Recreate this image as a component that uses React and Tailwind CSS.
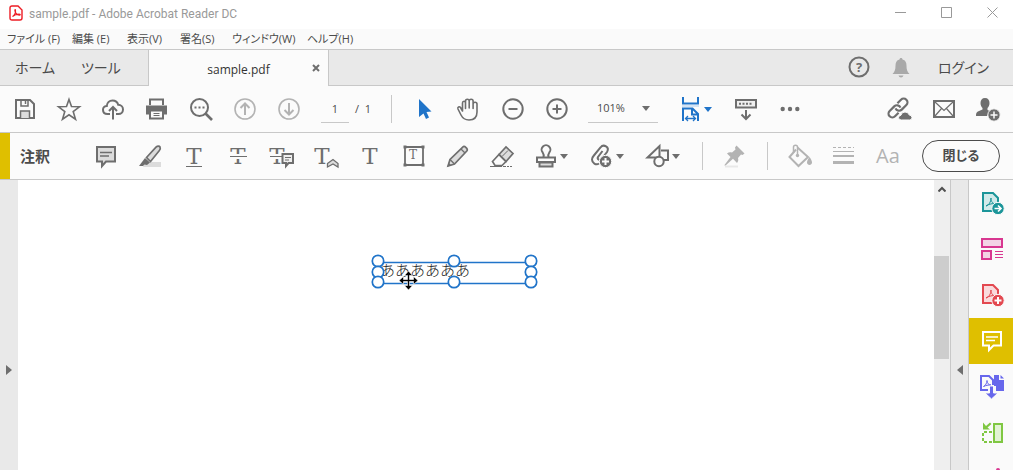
import React, { useState } from 'react';

function Icon({ children, className = '' }) {
  return (
    <svg viewBox="0 0 24 24" fill="none" stroke="currentColor" strokeWidth="2" className={`w-6 h-6 shrink-0 overflow-visible ${className}`} aria-hidden="true">
      {children}
    </svg>
  );
}

function Caret() {
  return (
    <svg viewBox="0 0 8 5" className="w-2 h-[5px] shrink-0" fill="currentColor" aria-hidden="true">
      <path d="M0 0h8L4 5z" />
    </svg>
  );
}

function ToolButton({ label, className = '', children }) {
  return (
    <button aria-label={label} className={`w-11 h-11 shrink-0 flex items-center justify-center ${className}`}>
      <Icon>{children}</Icon>
    </button>
  );
}

function MenuButton({ label, className = '', children }) {
  return (
    <button aria-label={label} className={`w-14 h-11 pl-[10px] shrink-0 flex items-center gap-[2px] ${className}`}>
      <Icon>{children}</Icon>
      <Caret />
    </button>
  );
}

// Serif T shared by the text markup tools
function LetterT({ x = 12, y = 20, size = 23 }) {
  return (
    <text x={x} y={y} fontSize={size} textAnchor="middle" fill="currentColor" stroke="none" fontFamily="'DejaVu Serif', serif">T</text>
  );
}

function PdfPage({ fill }) {
  return (
    <>
      <path d="M4 2h10l5 5v13H4z" fill={fill} />
      <path d="M7 15c3-1 5-4 5-8 0 4 2 6 5 6-3-1-7 0-10 2z" strokeWidth="1" />
    </>
  );
}

const menus = [
  { text: 'ファイル (F)', width: 'w-[65px]' },
  { text: '編集 (E)', width: 'w-[55px]' },
  { text: '表示(V)', width: 'w-[53px]' },
  { text: '署名(S)', width: 'w-[52px]' },
  { text: 'ウィンドウ(W)', width: 'w-[75px]' },
  { text: 'ヘルプ(H)', width: 'w-[60px]' },
];

const handles = [[7, 7], [83, 7], [160, 7], [7, 18], [160, 18], [7, 28], [83, 28], [160, 28]];

function TitleBar() {
  return (
    <header className="h-[29px] shrink-0 bg-white flex items-center text-[#999999]">
      <svg viewBox="0 0 14 16" className="w-[14px] h-4 ml-[9px] -mt-1" fill="none" stroke="#ed1c24" aria-hidden="true">
        <path d="M3 1h6l4 4v8q0 2-2 2H3q-2 0-2-2V3q0-2 2-2z" strokeWidth="1.4" />
        <path d="M3.5 11.5c2-1 3.5-4 3-6.5-.4-1-1 0-.4 1.5.8 2 2.4 3.5 4.6 3.6 1 0 .6-1-.7-1-2.4 0-4.5.7-6.5 2.4z" strokeWidth="1.1" />
      </svg>
      <h1 className="ml-[6px] -mt-px text-xs whitespace-nowrap font-['Roboto',sans-serif]">sample.pdf - Adobe Acrobat Reader DC</h1>
      <div className="ml-auto flex gap-1 -mt-1">
        <button aria-label="最小化" className="w-[42px] h-6 flex items-center justify-center">
          <svg viewBox="0 0 11 11" className="w-[11px] h-[11px]" stroke="currentColor"><path d="M0 5.5h11" /></svg>
        </button>
        <button aria-label="最大化" className="w-[42px] h-6 flex items-center justify-center">
          <svg viewBox="0 0 11 11" className="w-[11px] h-[11px]" fill="none" stroke="currentColor"><path d="M.5.5h10v10H.5z" /></svg>
        </button>
        <button aria-label="ウィンドウを閉じる" className="w-[42px] h-6 flex items-center justify-center">
          <svg viewBox="0 0 11 11" className="w-[11px] h-[11px]" stroke="currentColor"><path d="M.5.5l10 10M10.5.5l-10 10" /></svg>
        </button>
      </div>
    </header>
  );
}

function TabBar() {
  return (
    <div className="h-[37px] shrink-0 flex bg-[#e9e9e9] border-t border-[#c8c8c8] text-[#4b4b4b]">
      <div className="w-[148px] shrink-0 border-b border-[#c8c8c8] flex items-center pl-[15px] gap-[26px] text-sm">
        <button>ホーム</button>
        <button>ツール</button>
      </div>
      <div className="w-[181px] shrink-0 border-x border-[#c8c8c8] bg-[#fbfbfb] flex items-center">
        <span className="flex-1 pl-6 text-center text-[#333333] text-xs pt-[3px]">sample.pdf</span>
        <button aria-label="タブを閉じる" className="w-6 h-6 flex items-center justify-center text-[#6e6e6e]">
          <svg viewBox="0 0 8 8" className="w-2 h-2" stroke="currentColor" strokeWidth="2"><path d="M1 1l6 6M7 1L1 7" /></svg>
        </button>
      </div>
      <div className="flex-1 border-b border-[#c8c8c8] flex items-center justify-end pr-6">
        <button aria-label="ヘルプ" className="w-[42px] flex justify-center text-[#6e6e6e]">
          <Icon>
            <circle cx="12" cy="11" r="9.5" />
            <text x="12" y="16" fontSize="13" fontWeight="700" textAnchor="middle" fill="currentColor" stroke="none">?</text>
          </Icon>
        </button>
        <button aria-label="通知" className="w-[42px] flex justify-center text-[#a9a9a9]">
          <Icon>
            <path d="M12 2c-1 0-1.5.6-1.5 1.5C7.5 4.3 6.500 6.500 6.500 9.500c0 4-.6 6-3 8.500h17c-2.400-2.500-3-4.500-3-8.500 0-3-1-5.200-4-6 0-.9-.5-1.500-1.500-1.500zM9.500 19.500h5q-.6 2-2.500 2t-2.500-2z" fill="currentColor" stroke="none" />
          </Icon>
        </button>
        <button className="ml-4 text-sm">ログイン</button>
      </div>
    </div>
  );
}

function MainToolbar({ page, setPage, zoom, setZoom }) {
  return (
    <div className="h-[47px] shrink-0 flex items-center px-[3px] border-b border-[#c8c8c8] text-[#6e6e6e]">
      <ToolButton label="保存">
        <path d="M3 3h14l4 4v14H3z" />
        <path d="M8 3v6h7V3M12.5 4v3" strokeWidth="1.5" />
        <path d="M7.5 21v-7h9v7" fill="#dcdcdc" strokeWidth="1.5" />
      </ToolButton>
      <ToolButton label="お気に入り">
        <path d="M12 2.5l2.5 7 8 .3-6.3 4.8 2.3 7.6L12 17.800l-6.500 4.400 2.300-7.600L1.500 9.800l8-.3z" strokeWidth="1.6" />
      </ToolButton>
      <ToolButton label="クラウドに保存">
        <path d="M9 17H6.5C3.5 17 2 15 2 12.8 2 10.5 3.8 9 5.8 9 6 5.5 8.5 3.5 11.5 3.5c3 0 5 1.7 5.7 4.3C20 7.8 22 10 22 12.5S20 17 17.5 17H15" />
        <path d="M12 22.5V10.5M8 14l4-4 4 4" />
      </ToolButton>
      <ToolButton label="印刷">
        <path d="M5 8V2.5h13V8" />
        <path d="M1 8.5h21v9h-4V14H5v3.5H1z" fill="currentColor" stroke="none" />
        <path d="M5 13.5h13v8H5z" fill="#fbfbfb" />
        <path d="M8.5 16.5h6M8.5 18.5h6" strokeWidth="1" />
      </ToolButton>
      <ToolButton label="検索">
        <circle cx="10.5" cy="10.5" r="8.5" />
        <path d="M16.5 16.5l6.5 6.5" strokeWidth="2.6" />
        <path d="M5.5 10.5h2M9.5 10.5h2M13.5 10.5h2" />
      </ToolButton>
      <ToolButton label="前のページ" className="text-[#b3b3b3]">
        <circle cx="12" cy="12" r="10" strokeWidth="1.6" />
        <path d="M12 18V7M7.5 11L12 6.5l4.5 4.5" />
      </ToolButton>
      <ToolButton label="次のページ" className="text-[#b3b3b3]">
        <circle cx="12" cy="12" r="10" strokeWidth="1.6" />
        <path d="M12 6v11M7.5 13l4.5 4.5 4.5-4.5" />
      </ToolButton>

      <div className="ml-[10px] flex items-center gap-[6px] text-[11px] text-[#4b4b4b]">
        <input aria-label="ページ番号" value={page} onChange={(e) => setPage(e.target.value)} className="w-7 h-7 bg-transparent text-center border-b border-[#c8c8c8] outline-none" />
        <span className="w-4 whitespace-nowrap">/&nbsp; 1</span>
      </div>
      <div className="ml-5 mr-[11px] w-px h-7 bg-[#c8c8c8]" />

      <ToolButton label="選択" className="text-[#2074c9]">
        <path d="M6 2v18l4.5-3.5 2.5 5.5 3-1.5-2.5-5.5 5-.5z" fill="currentColor" stroke="none" />
      </ToolButton>
      <ToolButton label="手のひら">
        <path d="M5.500 14V6c0-2.300 3-2.300 3 0v5.500V4c0-2.300 3.700-2.300 3.700 0v7V4c0-2.300 3.900-2.300 3.900 0v7.500V7c0-2.300 3.900-2.300 3.900 0v8c0 5-3 8-8 8-4.500 0-6.500-2-8-5l-3-6c-.8-2 1.400-3 2.500-1.500z" strokeWidth="1.6" strokeLinejoin="round" />
      </ToolButton>
      <ToolButton label="縮小">
        <circle cx="12" cy="12" r="9.7" />
        <path d="M7.5 12h9" />
      </ToolButton>
      <ToolButton label="拡大">
        <circle cx="12" cy="12" r="9.7" />
        <path d="M7.5 12h9M12 7.5v9" />
      </ToolButton>

      <div className="ml-[9px] w-[70px] h-7 shrink-0 flex items-center pr-2 border-b border-[#c8c8c8]">
        <select aria-label="ズーム" value={zoom} onChange={(e) => setZoom(e.target.value)} className="flex-1 min-w-0 pl-[9px] h-6 appearance-none bg-transparent text-[11px] text-[#4b4b4b] outline-none">
          <option>75%</option>
          <option>100%</option>
          <option>101%</option>
          <option>150%</option>
        </select>
        <Caret />
      </div>
      <MenuButton label="ページに合わせる" className="ml-[10px] text-[#2074c9]">
        <path d="M5 0v6.5h15V0" />
        <path d="M4 9h17" stroke="#d3e3f4" />
        <path d="M5 24V11.5h9.5L20 17v7M14 12v5.5h6" />
        <path d="M8 21.5h9M10 19l-2.500 2.500L10 24M15 19l2.500 2.500L15 24" strokeWidth="1.3" />
      </MenuButton>
      <ToolButton label="スクロール表示">
        <path d="M2 3h20v7.5H2z" fill="#efefef" />
        <path d="M5 6.7h2M8.5 6.7h2M12 6.7h2M15.5 6.7h2" />
        <path d="M12 13v9M7.5 17.5L12 22l4.5-4.5" />
      </ToolButton>
      <ToolButton label="その他">
        <g fill="currentColor" stroke="none">
          <circle cx="4.7" cy="12" r="2.2" />
          <circle cx="12" cy="12" r="2.2" />
          <circle cx="19.3" cy="12" r="2.2" />
        </g>
      </ToolButton>

      <div className="ml-auto flex">
        <ToolButton label="リンクを共有">
          <g transform="rotate(-45 10 11)" strokeWidth="2.2">
            <path d="M7 14.800H2a3.800 3.800 0 010-7.600h6.500a3.800 3.800 0 013.500 5.300" />
            <path d="M13 7.200h5a3.800 3.800 0 010 7.600h-6.500A3.800 3.800 0 018 9.500" />
          </g>
          <path d="M13.500 23q-3 0-3-2.300t2.500-2.500q.5-3.200 4-3.200t4 2.800q3 .5 3 2.900T21.500 23z" fill="currentColor" stroke="#fbfbfb" strokeWidth="1" />
        </ToolButton>
        <ToolButton label="メール">
          <path d="M2 4h20v16H2z" />
          <path d="M3 5l9 8.5L21 5M3 19l6.5-7.5M21 19l-6.5-7.5" strokeWidth="1.2" />
        </ToolButton>
        <ToolButton label="ユーザーを追加">
          <path d="M9 1c3 0 4.5 2 4.5 5 0 2.5-1 4-2 5v2l3 1.5-3.5 4.5H0c0-3 .5-4 3-5l3.500-1.500V11c-1-1-2-2.500-2-5 0-3 1.500-5 4.500-5z" fill="currentColor" stroke="none" />
          <circle cx="18" cy="18" r="6.2" fill="currentColor" stroke="#fbfbfb" strokeWidth="1" />
          <path d="M18 14.5v7M14.5 18h7" stroke="#fbfbfb" strokeWidth="1.5" />
        </ToolButton>
      </div>
    </div>
  );
}

function CommentToolbar() {
  return (
    <div className="h-[47px] shrink-0 flex items-center border-b border-[#c8c8c8] text-[#6e6e6e]">
      <div className="w-[10px] self-stretch shrink-0 bg-[#dfbf00]" />
      <h2 className="w-[74px] shrink-0 pl-[10px] text-[15px] font-bold text-[#4b4b4b]">注釈</h2>
      <ToolButton label="ノート注釈">
        <path d="M3 3h18v14.5H12L8 22v-4.5H3z" fill="#dcdcdc" />
        <path d="M6 8.5h12M6 12h9" strokeWidth="1.5" />
      </ToolButton>
      <ToolButton label="ハイライト">
        <path d="M7 18h16v5H5z" fill="#dcdcdc" stroke="none" />
        <path d="M8.5 13.5L18 3.2C19.5 1.8 21.5 2 22 3s.3 2.5-.8 3.8L12.5 17.5z" fill="#dcdcdc" strokeWidth="1.7" />
        <path d="M7 14l5 4.5-3 2.5-2.5-.5L5 22H1z" fill="currentColor" stroke="none" />
      </ToolButton>
      <ToolButton label="下線">
        <LetterT />
        <path d="M4 22.5h16" strokeWidth="1" />
      </ToolButton>
      <ToolButton label="取り消し線">
        <LetterT />
        <path d="M6 12.5h12" stroke="#fbfbfb" strokeWidth="5" />
        <path d="M4 12.5h17" strokeWidth="1" />
      </ToolButton>
      <ToolButton label="テキストを置換">
        <LetterT x={7} />
        <path d="M0 12.5h14" stroke="#fbfbfb" strokeWidth="5" />
        <path d="M0 12.5h12" strokeWidth="1" />
        <path d="M12.5 10H23v9h-4.5l-2.500 3v-3h-3.500z" fill="#efefef" />
        <path d="M15 13.5h6M15 16h4" strokeWidth="1" />
      </ToolButton>
      <ToolButton label="テキストを挿入">
        <LetterT x={8} />
        <path d="M13.5 19.5L19 15.5l5 4V23l-5-3-5.5 3z" fill="#dcdcdc" strokeWidth="1.3" />
      </ToolButton>
      <ToolButton label="テキスト注釈">
        <LetterT />
      </ToolButton>
      <ToolButton label="テキストボックス">
        <path d="M3 3h18v18H3z" strokeWidth="1.8" />
        <path d="M1.5 1.5h3v3h-3zM19.5 1.5h3v3h-3zM1.5 19.5h3v3h-3zM19.5 19.5h3v3h-3z" fill="currentColor" stroke="none" />
        <LetterT x={11} y={15} size={12} />
      </ToolButton>
      <ToolButton label="描画">
        <path d="M2 22l2-6.500L17 2.800c1.500-1.300 5.300 2 4 4L8.500 20z" fill="#dcdcdc" strokeWidth="1.7" />
        <path d="M4 15.5L8.5 20M15 5l4 4" strokeWidth="1.3" />
        <path d="M1.5 22.5l1-4 3 3z" fill="currentColor" stroke="none" />
      </ToolButton>
      <ToolButton label="消しゴム">
        <path d="M9 10.5L16 3l7 6.5-7 8z" fill="#dcdcdc" strokeWidth="1.7" />
        <path d="M9 10.5l7 7-4 4H5L2.5 17.5z" strokeWidth="1.7" />
        <path d="M12 12.5l6-6" strokeWidth="1" />
        <path d="M0 22.5h12M13 22.5h3M17 22.5h2M20 22.5h2" strokeWidth="1" />
      </ToolButton>
      <MenuButton label="スタンプ">
        <path d="M9.5 13.5c.5-2 .3-3.500-.8-5A4.400 4.400 0 1115.300 8.500c-1.100 1.500-1.300 3-.8 5" />
        <path d="M3 13.500h18v4.500H3z" fill="#fbfbfb" />
        <path d="M5.5 18.5h13v4h-13z" fill="#dcdcdc" />
      </MenuButton>
      <MenuButton label="添付ファイル">
        <path d="M9 19.500C6 21.500 2 19 2 15.500c0-1.500.6-2.500 1.500-3.500L10.500 3.500c3-4 9.500-.5 6.500 4.500l-5.500 7c-1.700 2-4.700.5-3.500-2L12.500 7" />
        <circle cx="15.500" cy="17.500" r="6.200" fill="currentColor" stroke="#fbfbfb" strokeWidth="1" />
        <path d="M15.500 14v7M12 17.500h7" stroke="#fbfbfb" />
      </MenuButton>
      <MenuButton label="描画ツール">
        <path d="M13 13.5H1.5L13.5 2v11" />
        <path d="M15 6.5h7V16h-4" />
        <circle cx="13" cy="17.5" r="4.7" fill="#fbfbfb" />
      </MenuButton>

      <div className="ml-[10px] w-px h-7 shrink-0 bg-[#c8c8c8]" />
      <ToolButton label="ツールを固定" className="ml-[10px] mr-[10px] text-[#b3b3b3]">
        <path d="M13.5 1.5l8 8-2 1.5-1.5-.5-3 3.5c.5 2 .3 3.5-1 5l-4-4.200L2 22l-.5-1L7.500 13 4 9.500c1.500-1.300 3-1.500 5-1l3.500-3-.5-2z" fill="currentColor" stroke="none" />
        <path d="M2 22.5h13" stroke="#e8e8e8" />
      </ToolButton>
      <div className="w-px h-7 shrink-0 bg-[#c8c8c8]" />
      <ToolButton label="塗りつぶし" className="ml-[10px] text-[#b3b3b3]">
        <path d="M8 5.5L1.5 13l9 9L20 13 9.5 3.5" />
        <path d="M5.5 9V3c0-2.500 4-2.500 4 0v8" strokeWidth="1.5" />
        <circle cx="9.5" cy="11.5" r="1.7" fill="currentColor" stroke="none" />
        <path d="M21.5 13c1.5 2 2.5 4 2.5 5.5 0 3.3-5 3.3-5 0 0-1.5 1-3.5 2.5-5.5z" fill="currentColor" stroke="none" />
      </ToolButton>
      <ToolButton label="線の太さ" className="text-[#b3b3b3]">
        <path d="M1 3.5h21" strokeWidth="1" strokeDasharray="3 2" />
        <path d="M1 7.5h21" strokeWidth="1" />
        <path d="M1 12h21" />
        <path d="M1 18.5h21" strokeWidth="3" />
      </ToolButton>
      <button aria-label="テキストのプロパティ" className="w-11 shrink-0 text-center text-xl text-[#b3b3b3]">Aa</button>
      <button className="ml-auto mr-[13px] w-[78px] h-8 shrink-0 rounded-full border border-[#4b4b4b] text-[13px] font-bold text-[#4b4b4b]">閉じる</button>
    </div>
  );
}

function TextAnnotation() {
  return (
    <div className="absolute left-[360px] top-[82px] w-[153px] h-[22px]">
      <p className="pl-[2px] text-[15px] leading-4 text-[#222222] whitespace-nowrap font-['Noto_Sans_CJK_JP',sans-serif] font-light [font-feature-settings:normal]">ああああああ</p>
      <svg viewBox="0 0 168 36" className="absolute -left-[7px] -top-2 w-[168px] h-9 overflow-visible" fill="none" aria-hidden="true">
        <path d="M7 8.5h153v21H7z" stroke="#2074c9" strokeWidth="1.6" />
        {handles.map(([x, y]) => (
          <circle key={`${x}-${y}`} cx={x} cy={y} r="5.7" fill="#ffffff" stroke="#2074c9" strokeWidth="1.7" />
        ))}
        {/* Move pointer */}
        <path d="M37.5 17l4 4.5h-3v4h4v-3l4.500 4-4.500 4v-3h-4v4h3l-4 4.500-4-4.500h3v-4h-4v3l-4.500-4 4.500-4v3h4v-4h-3z" fill="#000000" stroke="#ffffff" strokeWidth="0.6" />
      </svg>
    </div>
  );
}

function SideButton({ label, className = '', children }) {
  return (
    <button aria-label={label} className={`w-11 h-[46px] shrink-0 flex items-center justify-center ${className}`}>
      <Icon>{children}</Icon>
    </button>
  );
}

function Sidebar() {
  return (
    <aside className="w-[45px] shrink-0 border-l border-[#c8c8c8] bg-[#fafafa] flex flex-col overflow-hidden">
      <SideButton label="PDF を書き出し" className="text-[#1b9599]">
        <PdfPage fill="#d1eaea" />
        <circle cx="19" cy="17.5" r="6.2" fill="currentColor" stroke="#fafafa" strokeWidth="1" />
        <path d="M15.5 17.5h6M19 14.5l3 3-3 3" stroke="#ffffff" strokeWidth="1.6" />
      </SideButton>
      <SideButton label="ページを整理" className="text-[#d83790]">
        <path d="M3 2h20v8H3zM3 14h9v8H3z" fill="#f3d3e5" />
        <path d="M16 14.5h8M16 17.5h8M16 20.5h8" strokeWidth="1" />
      </SideButton>
      <SideButton label="PDF を作成" className="text-[#e34850]">
        <PdfPage fill="#f9dadc" />
        <circle cx="19" cy="17.5" r="6.2" fill="currentColor" stroke="#fafafa" strokeWidth="1" />
        <path d="M15.5 17.5h7M19 14v7" stroke="#ffffff" />
      </SideButton>
      <SideButton label="注釈" className="bg-[#dfbf00] text-white">
        <path d="M4 3h18v13.5h-7.5L10 21v-4.5H4z" />
        <path d="M7 8h12M7 11.5h9" strokeWidth="1.6" />
      </SideButton>
      <SideButton label="ファイルを結合" className="text-[#6767ec]">
        <path d="M9 15H2V1h8l4 4v5" />
        <path d="M4.5 11.5c2-1 3.5-3.5 3.5-6 0 2.5 1.5 4.5 4 4.5-3 0-5 .3-7.5 1.5z" strokeWidth="1" />
        <path d="M15 0h5v5h5v11h-8v-5h-2z" fill="currentColor" stroke="none" />
        <path d="M21.5 0L25 3.5h-3.5z" fill="currentColor" stroke="none" />
        <path d="M10.5 11h4v7h4.5l-6.500 6L6 18h4.500z" fill="currentColor" stroke="#fafafa" strokeWidth="1" />
      </SideButton>
      <SideButton label="ページを編集" className="text-[#7fc742]">
        <path d="M15 3h8v18h-8z" fill="#e2f3d4" />
        <path d="M13 11H4v10h9" strokeDasharray="3 2" />
        <path d="M4 1.5v7h7L8.500 6.500l4-3.500-1.500-1.500L7 5z" fill="currentColor" stroke="none" />
      </SideButton>
      <SideButton label="入力と署名" className="text-[#d83790]">
        <path d="M5 22l3-10 8-6 5 5-6 8z" />
        <circle cx="19" cy="3" r="2" fill="currentColor" stroke="none" />
      </SideButton>
    </aside>
  );
}

export default function App() {
  const [page, setPage] = useState('1');
  const [zoom, setZoom] = useState('101%');

  return (
    <div className="h-screen flex flex-col overflow-hidden bg-[#fbfbfb] font-['Open_Sans','Noto_Sans_CJK_JP',sans-serif] [font-feature-settings:'palt']">
      <TitleBar />
      <nav className="h-5 shrink-0 flex items-center pl-[7px] bg-[#fafafa] text-[#4b4b4b] text-[11px]">
        {menus.map((m) => (
          <button key={m.text} className={`${m.width} shrink-0 text-left whitespace-nowrap`}>{m.text}</button>
        ))}
      </nav>
      <TabBar />
      <MainToolbar page={page} setPage={setPage} zoom={zoom} setZoom={setZoom} />
      <CommentToolbar />

      <div className="flex-1 min-h-0 flex">
        <button aria-label="ナビゲーションパネルを開く" className="w-[18px] shrink-0 bg-[#e9e9e9] flex items-center justify-center pt-[90px] text-[#6e6e6e]">
          <svg viewBox="0 0 6 10" className="w-[6px] h-[10px]" fill="currentColor"><path d="M0 0l6 5-6 5z" /></svg>
        </button>
        <main className="relative flex-1 min-w-0 bg-white overflow-hidden">
          <TextAnnotation />
        </main>
        <div className="w-4 pr-px shrink-0 bg-[#efefef] flex flex-col items-center">
          <button aria-label="上へスクロール" className="h-[17px] flex items-center">
            <svg viewBox="0 0 8 6" className="w-2 h-[6px]" fill="none" stroke="#505050" strokeWidth="2"><path d="M.5 5.500L4 2l3.500 3.500" /></svg>
          </button>
          <div className="mt-[59px] w-full h-[103px] bg-[#cdcdcd]" />
        </div>
        <button aria-label="ツールパネルを閉じる" className="w-[18px] shrink-0 border-l border-[#c8c8c8] bg-[#e9e9e9] flex items-center justify-center pt-[90px] text-[#6e6e6e]">
          <svg viewBox="0 0 6 10" className="w-[6px] h-[10px]" fill="currentColor"><path d="M6 0L0 5l6 5z" /></svg>
        </button>
        <Sidebar />
      </div>
    </div>
  );
}
